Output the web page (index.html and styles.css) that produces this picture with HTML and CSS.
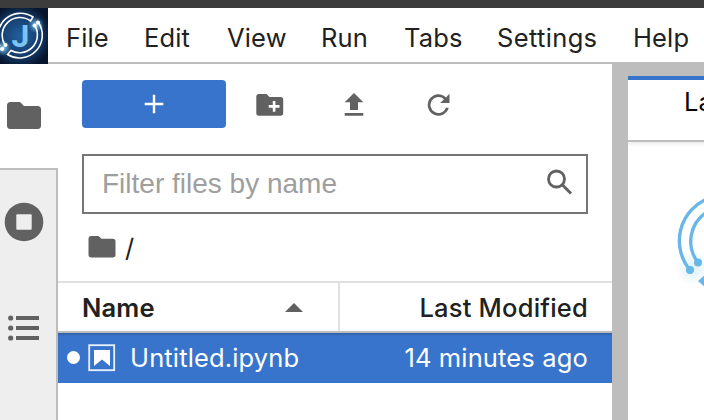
FILE: index.html
```html
<!DOCTYPE html>
<html lang="en">
<head>
<meta charset="UTF-8">
<meta name="viewport" content="width=device-width, initial-scale=1.0">
<title>JupyterLab</title>
<link rel="stylesheet" href="styles.css">
</head>
<body>

<div class="topbar"></div>
<header class="menubar">
  <svg class="logo" width="48" height="56" viewBox="0 0 48 56">
    <defs>
      <radialGradient id="space">
        <stop offset="0" stop-color="#235f9c"/>
        <stop offset="0.6" stop-color="#163f70"/>
        <stop offset="1" stop-color="#07152c"/>
      </radialGradient>
      <radialGradient id="glow">
        <stop offset="0" stop-color="#c8f4ff"/>
        <stop offset="0.4" stop-color="#6fb9dc" stop-opacity="0.65"/>
        <stop offset="1" stop-color="#6fb9dc" stop-opacity="0"/>
      </radialGradient>
    </defs>
    <rect width="48" height="56" fill="#07152c"/>
    <circle cx="20" cy="28" r="32" fill="url(#space)"/>
    <circle cx="36" cy="17" r="8" fill="url(#glow)"/>
    <circle cx="3" cy="40" r="8" fill="url(#glow)"/>
    <g fill="none" stroke="#fff" stroke-width="1.6">
      <path d="M0 38A22.800 22.800 0 0 1 33 9L30.500 13A17.800 17.800 0 0 0 5 37"/>
      <path d="M38.500 14.500A22.800 22.800 0 0 1 7.500 46.500L11 42.500A17.800 17.800 0 0 0 35 18"/>
    </g>
    <g fill="#fff">
      <circle cx="38" cy="14.500" r="2"/>
      <circle cx="34.500" cy="17.500" r="2"/>
      <circle cx="5.500" cy="37" r="2"/>
      <circle cx="2" cy="41" r="2"/>
    </g>
    <text class="logo-letter" x="11.500" y="39">J</text>
  </svg>
  <nav class="menu">
    <span class="file">File</span>
    <span class="edit">Edit</span>
    <span class="view">View</span>
    <span class="run">Run</span>
    <span class="tabs">Tabs</span>
    <span class="settings">Settings</span>
    <span class="help">Help</span>
  </nav>
</header>

<div class="workspace">
  <aside class="sidebar">
    <div class="side-tab active">
      <svg width="34" height="28" viewBox="0 0 34 28"><path d="M3.500 0H13l4 4h13.500A3.500 3.500 0 0 1 34 7.500v16A3.500 3.500 0 0 1 30.500 27h-27A3.500 3.500 0 0 1 0 23.500v-20A3.500 3.500 0 0 1 3.500 0z"/></svg>
    </div>
    <div class="side-tab">
      <svg width="40" height="40" viewBox="0 0 40 40"><circle cx="20" cy="20" r="19.300"/><rect x="12.300" y="12.300" width="15.400" height="15.400" rx="1" fill="#eee"/></svg>
    </div>
    <div class="side-tab">
      <svg width="32" height="26" viewBox="0 0 32 26"><circle cx="2.700" cy="3" r="2.600"/><circle cx="2.700" cy="13" r="2.600"/><circle cx="2.700" cy="23" r="2.600"/><path d="M8 1h23v4H8zM8 11h23v4H8zM8 21h23v4H8z"/></svg>
    </div>
  </aside>

  <section class="browser">
    <div class="toolbar">
      <button class="new-button">
        <svg width="20" height="20" viewBox="0 0 20 20"><path d="M8.800 .7h2.400v8.100h8.100v2.400h-8.100v8.100H8.800v-8.100H.7V8.800h8.100z" fill="#fff"/></svg>
      </button>
      <svg class="new-folder" width="28" height="22" viewBox="0 0 28 22"><path d="M3 0h7.500L13.500 3H24.500A2.700 2.700 0 0 1 27.200 5.700V19A2.700 2.700 0 0 1 24.500 21.700H3A2.700 2.700 0 0 1 .3 19V2.700A2.700 2.700 0 0 1 3 0z"/><path d="M16.800 7h2.600v4.100h4.100v2.600h-4.100v4.100h-2.600v-4.100h-4.100v-2.600h4.100z" fill="#fff"/></svg>
      <svg class="upload" width="20" height="24" viewBox="0 0 20 24"><path d="M10 0l9.300 9.300H14V17H6V9.300H.7zM.7 20h18.600v2.700H.7z"/></svg>
      <svg class="refresh" width="24" height="24" viewBox="0 0 24 24"><path d="M19 5.400A10.700 10.700 0 1 0 21.800 15.700H19A8 8 0 1 1 17 7.200L13.200 11H22.500V1.700z"/></svg>
    </div>
    <div class="filter">
      <input type="text" placeholder="Filter files by name">
      <svg width="26" height="27" viewBox="0 0 26 27"><circle cx="9.500" cy="10" r="8" fill="none" stroke="#616161" stroke-width="2.800"/><path d="M14.800 15.300l9.200 9.200" stroke="#616161" stroke-width="3"/></svg>
    </div>
    <div class="crumbs">
      <svg width="28" height="22" viewBox="0 0 28 22"><path d="M3 0h7.500L13.500 2.800H24.800A2.700 2.700 0 0 1 27.500 5.500V18.800A2.700 2.700 0 0 1 24.800 21.500H3.200A2.700 2.700 0 0 1 .5 18.800V2.700A2.700 2.700 0 0 1 3 0z"/></svg>
      <span>/</span>
    </div>
    <div class="list-head">
      <div class="col-name">
        <span>Name</span>
        <svg width="18" height="9" viewBox="0 0 18 9"><path d="M0 9l9-9 9 9z"/></svg>
      </div>
      <div class="col-modified"><span>Last Modified</span></div>
    </div>
    <div class="list-row">
      <span class="dot"></span>
      <svg width="28" height="28" viewBox="0 0 28 28"><rect x="1.200" y="1.200" width="25" height="25" fill="none" stroke="#fff" stroke-opacity="0.900" stroke-width="1.800"/><path d="M6 6h16v16l-8-6.500L6 22z" fill="#fff"/></svg>
      <span class="filename">Untitled.ipynb</span>
      <span class="modified">14 minutes ago</span>
    </div>
  </section>

  <main class="dock">
    <div class="dock-tab"><span>La</span></div>
    <div class="launcher">
      <svg width="76" height="160" viewBox="0 0 76 160">
        <defs>
          <radialGradient id="halo">
            <stop offset="0" stop-color="#9bd3ea" stop-opacity="0.350"/>
            <stop offset="1" stop-color="#9bd3ea" stop-opacity="0"/>
          </radialGradient>
        </defs>
        <circle cx="65" cy="127" r="17" fill="url(#halo)"/>
        <g fill="none" stroke="#69b7e6" stroke-width="3.400">
          <path d="M62 128A45.500 45.500 0 0 1 80 56.500"/>
          <path d="M70 120.500A34.500 34.500 0 0 1 80 69.500"/>
        </g>
        <circle cx="62" cy="128" r="4" fill="#69b7e6"/>
        <circle cx="70" cy="120.500" r="4" fill="#69b7e6"/>
        <path d="M70 139l8-7v14z" fill="#69b7e6"/>
      </svg>
    </div>
  </main>
</div>

</body>
</html>
```
FILE: styles.css
```css
* {
  box-sizing: border-box;
}
body {
  margin: 0;
  height: 420px;
  display: flex;
  flex-direction: column;
  overflow: hidden;
  background: #fff;
  color: #212121;
  font-family: Inter, "Liberation Sans", sans-serif;
  font-size: 25.5px;
  letter-spacing: 0.15px;
}
svg {
  display: block;
  flex: none;
  fill: #616161;
}
.topbar {
  height: 8px;
  flex: none;
  background: #3c3c3c;
}
.menubar {
  height: 56px;
  flex: none;
  display: flex;
  background: linear-gradient(#bdbdbd, #bdbdbd) bottom / 100% 2px no-repeat;
}
.logo-letter {
  font: bold 32px Roboto, sans-serif;
  letter-spacing: 0;
  fill: #7cc4f5;
}
.menu {
  display: flex;
  padding-left: 18px;
  line-height: 60px;
  white-space: nowrap;
}
.menu span {
  flex: none;
}
.file {
  width: 78px;
}
.edit {
  width: 83px;
}
.view {
  width: 94px;
}
.run {
  width: 83px;
}
.tabs {
  width: 93px;
}
.settings {
  width: 136px;
  letter-spacing: 0.35px;
}
.workspace {
  flex: 1;
  display: flex;
  min-height: 0;
}
.sidebar {
  width: 58px;
  flex: none;
  background: #eee;
}
.side-tab {
  height: 106px;
  padding: 0 8px 2px 0;
  display: flex;
  align-items: center;
  justify-content: center;
  border-right: 2px solid #bdbdbd;
}
.side-tab.active {
  padding: 0 10px 0 0;
  background: #fff;
  border-right: none;
  border-bottom: 2px solid #bdbdbd;
}
.side-tab:last-child {
  height: 144px;
  align-items: flex-start;
  padding-top: 39px;
}
.browser {
  width: 554px;
  flex: none;
}
.toolbar {
  height: 90px;
  padding: 16px 24px 0;
  display: flex;
}
.new-button {
  width: 144px;
  height: 48px;
  padding: 0;
  display: flex;
  align-items: center;
  justify-content: center;
  border: none;
  border-radius: 4px;
  background: #3874cb;
}
.new-folder {
  margin: 14px 0 0 30px;
}
.upload {
  margin: 13px 0 0 60px;
}
.refresh {
  margin: 12px 0 0 63px;
}
.filter {
  height: 60px;
  margin: 0 24px;
  padding: 0 13px 0 18px;
  display: flex;
  align-items: center;
  border: 2px solid #757575;
}
.filter input {
  flex: 1;
  min-width: 0;
  padding: 0;
  border: none;
  outline: none;
  background: none;
  font: 28px "Liberation Sans", sans-serif;
}
.filter svg {
  margin-bottom: 3px;
}
.filter input::placeholder {
  color: #9e9e9e;
}
.crumbs {
  height: 67px;
  padding: 0 0 1px 30px;
  display: flex;
  align-items: center;
  gap: 9px;
}
.list-head {
  height: 52px;
  display: flex;
  border-top: 2px solid #e0e0e0;
  border-bottom: 2px solid #bdbdbd;
  font-weight: 600;
}
.col-name {
  width: 282px;
  padding: 0 35px 0 24px;
  display: flex;
  align-items: center;
  justify-content: space-between;
  border-right: 2px solid #e0e0e0;
}
.col-modified {
  flex: 1;
  padding-right: 24px;
  line-height: 50px;
  text-align: right;
  font-weight: 500;
  letter-spacing: 0.2px;
}
.list-row {
  height: 50px;
  padding: 0 24px 1px 9px;
  display: flex;
  align-items: center;
  background: #3874cb;
  color: #fff;
  box-shadow: inset 0 3px 3px -2px rgba(0, 0, 0, 0.25);
}
.dot {
  width: 13px;
  height: 13px;
  margin-right: 8px;
  border-radius: 50%;
  background: #fff;
}
.filename {
  margin-left: 14px;
}
.modified {
  margin-left: auto;
}
.dock {
  flex: 1;
  min-width: 0;
  padding: 12px 0 0 16px;
  background: #bdbdbd;
}
.dock-tab {
  height: 64px;
  padding-left: 56px;
  overflow: hidden;
  border-top: 4px solid #3874cb;
  background: #fff;
  color: #000;
  line-height: 44px;
}
.launcher {
  height: 280px;
  margin-top: 2px;
  background: linear-gradient(#ededed, #fff 5px);
}
```
